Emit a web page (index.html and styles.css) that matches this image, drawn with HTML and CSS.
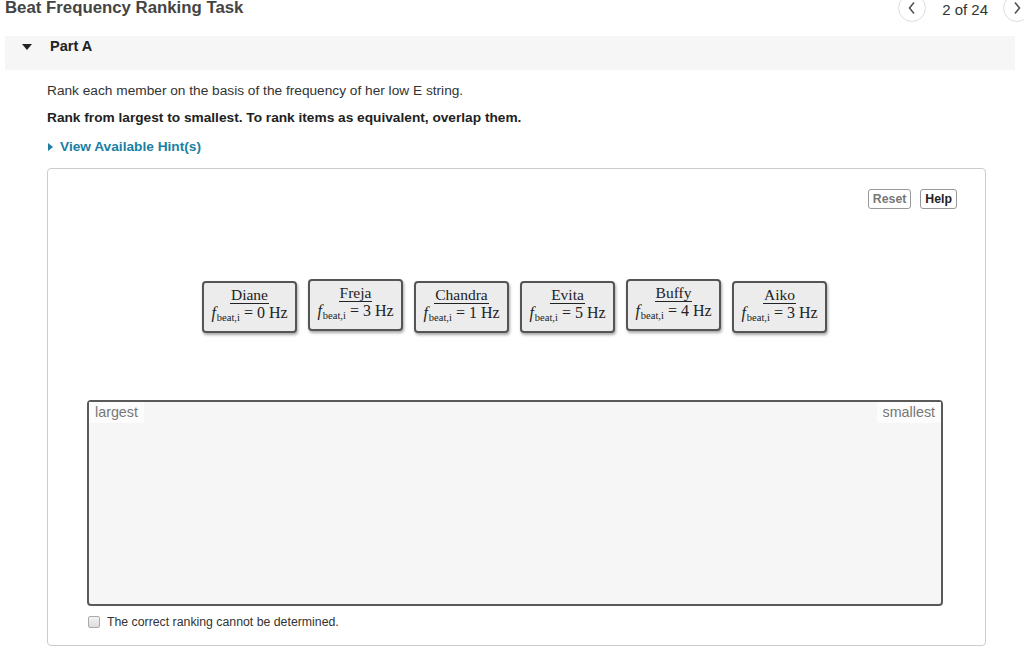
FILE: index.html
```html
<!DOCTYPE html>
<html>
  <head>
    <meta charset="UTF-8" />
    <title>Beat Frequency Ranking Task</title>
    <link rel="stylesheet" href="styles.css">
  </head>

  <body>
    <div class="top-bar">
      <h1 class="title">Beat Frequency Ranking Task</h1>
      <div class="pager">
        <span class="nav-circle">
          <svg width="10" height="14" viewBox="0 0 10 14"><path d="M7 1.5 L2.5 7 L7 12.5" fill="none" stroke="#555" stroke-width="1.6"/></svg>
        </span>
        <span class="pager-text">2 of 24</span>
        <span class="nav-circle">
          <svg width="10" height="14" viewBox="0 0 10 14"><path d="M3 1.5 L7.5 7 L3 12.5" fill="none" stroke="#555" stroke-width="1.6"/></svg>
        </span>
      </div>
    </div>

    <div class="part-bar">
      <span class="part-arrow"></span>
      <span class="part-title">Part A</span>
    </div>

    <div class="question">
      <p class="prompt">Rank each member on the basis of the frequency of her low E string.</p>
      <p class="prompt bold">Rank from largest to smallest. To rank items as equivalent, overlap them.</p>
      <p class="hint"><span class="hint-arrow"></span>View Available Hint(s)</p>

      <div class="rank-box">
        <div class="tools">
          <button class="tool-btn reset">Reset</button>
          <button class="tool-btn">Help</button>
        </div>

        <div class="cards">
          <div class="card"><span class="name">Diane</span><span class="eq"><i>f</i><sub>beat,i</sub> = 0 Hz</span></div>
          <div class="card up"><span class="name">Freja</span><span class="eq"><i>f</i><sub>beat,i</sub> = 3 Hz</span></div>
          <div class="card"><span class="name">Chandra</span><span class="eq"><i>f</i><sub>beat,i</sub> = 1 Hz</span></div>
          <div class="card"><span class="name">Evita</span><span class="eq"><i>f</i><sub>beat,i</sub> = 5 Hz</span></div>
          <div class="card up"><span class="name">Buffy</span><span class="eq"><i>f</i><sub>beat,i</sub> = 4 Hz</span></div>
          <div class="card"><span class="name">Aiko</span><span class="eq"><i>f</i><sub>beat,i</sub> = 3 Hz</span></div>
        </div>

        <div class="drop-area">
          <span class="label">largest</span>
          <span class="label">smallest</span>
        </div>

        <label class="cant">
          <span class="check"></span>
          The correct ranking cannot be determined.
        </label>
      </div>
    </div>
  </body>
</html>
```

FILE: styles.css
```css
body {
  margin: 0;
  padding: 0;
  font-family: "Liberation Sans", Arial, sans-serif;
  font-size: 13px;
  color: #333;
  background: #fff;
  overflow: hidden;
}

.top-bar {
  display: flex;
  justify-content: space-between;
  align-items: flex-start;
  height: 36px;
  padding-left: 5px;
}

.title {
  margin: 0;
  margin-top: -2px;
  font-size: 16.8px;
  line-height: 20px;
  color: #444;
}

.pager {
  display: flex;
  align-items: center;
  margin-top: -6px;
  margin-right: -7px;
}

.nav-circle {
  width: 28px;
  height: 28px;
  border: 1px solid #ddd;
  border-radius: 50%;
  display: flex;
  align-items: center;
  justify-content: center;
  box-sizing: border-box;
}

.pager-text {
  font-size: 15px;
  color: #333;
  margin: 3px 15px 0 16px;
}

.part-bar {
  margin: 0 9px 0 5px;
  height: 34px;
  background: #f6f6f6;
  display: flex;
  align-items: flex-start;
  padding-top: 2px;
  box-sizing: border-box;
}

.part-arrow {
  width: 0;
  height: 0;
  border-left: 5px solid transparent;
  border-right: 5px solid transparent;
  border-top: 6px solid #222;
  margin: 6px 0 0 17px;
}

.part-title {
  font-weight: bold;
  font-size: 14.5px;
  color: #222;
  margin-left: 18px;
  line-height: 17px;
}

.question {
  padding: 12px 38px 0 47px;
}

.prompt {
  margin: 0 0 10px;
  font-size: 13.7px;
  line-height: 17px;
  color: #333;
}

.prompt.bold {
  font-weight: bold;
  color: #222;
  margin-bottom: 12px;
}

.hint {
  margin: 0 0 12px;
  font-size: 13.7px;
  line-height: 18px;
  font-weight: bold;
  color: #1a7fa3;
  display: flex;
  align-items: center;
}

.hint-arrow {
  width: 0;
  height: 0;
  border-top: 4px solid transparent;
  border-bottom: 4px solid transparent;
  border-left: 5px solid #1a7fa3;
  margin: 0 7px 0 1px;
}

.rank-box {
  border: 1px solid #ccc;
  border-radius: 4px;
  height: 478px;
  box-sizing: border-box;
  padding: 20px 27px 0 39px;
}

.tools {
  display: flex;
  justify-content: flex-end;
  gap: 9px;
  margin-right: 1px;
}

.tool-btn {
  font-family: "Liberation Sans", Arial, sans-serif;
  font-size: 12.3px;
  font-weight: bold;
  background: #fff;
  border: 1px solid #999;
  border-radius: 3px;
  padding: 2px 4px;
  height: 20px;
  color: #222;
}

.tool-btn.reset {
  color: #777;
}

.cards {
  display: flex;
  justify-content: center;
  align-items: flex-start;
  gap: 11px;
  margin-top: 70px;
  padding-right: 16px;
  height: 70px;
}

.card {
  width: 95px;
  height: 52px;
  box-sizing: border-box;
  margin-top: 2px;
  background: #ececec;
  border: 2px solid #555;
  border-radius: 4px;
  box-shadow: 1px 2px 3px rgba(0, 0, 0, 0.35);
  display: flex;
  flex-direction: column;
  align-items: center;
  padding-top: 3px;
  color: #222;
}

.card.up {
  margin-top: 0;
}

.name {
  font-family: "Liberation Serif", serif;
  font-size: 15.5px;
  line-height: 17px;
  border-bottom: 1px solid #222;
  padding: 0 1px;
}

.eq {
  font-family: "Liberation Serif", serif;
  font-size: 16px;
  line-height: 18px;
  white-space: nowrap;
}

.eq sub {
  font-size: 10.5px;
  vertical-align: -3px;
  margin-left: 1px;
}

.drop-area {
  margin: 51px 15px 0 0;
  height: 206px;
  box-sizing: border-box;
  border: 2px solid #5a5a5a;
  border-radius: 4px;
  background: #f6f6f6;
  display: flex;
  justify-content: space-between;
  align-items: flex-start;
}

.label {
  background: #fcfcfc;
  color: #777;
  font-size: 14.3px;
  line-height: 18px;
  padding: 1px 6px 2px 6px;
}

.cant {
  display: flex;
  align-items: center;
  gap: 7px;
  margin-top: 9px;
  margin-left: 1px;
  font-size: 12.3px;
  color: #333;
}

.check {
  width: 12px;
  height: 12px;
  box-sizing: border-box;
  border: 1px solid #aaa;
  border-radius: 2px;
  background: linear-gradient(#f4f4f4, #dcdcdc);
}
```
